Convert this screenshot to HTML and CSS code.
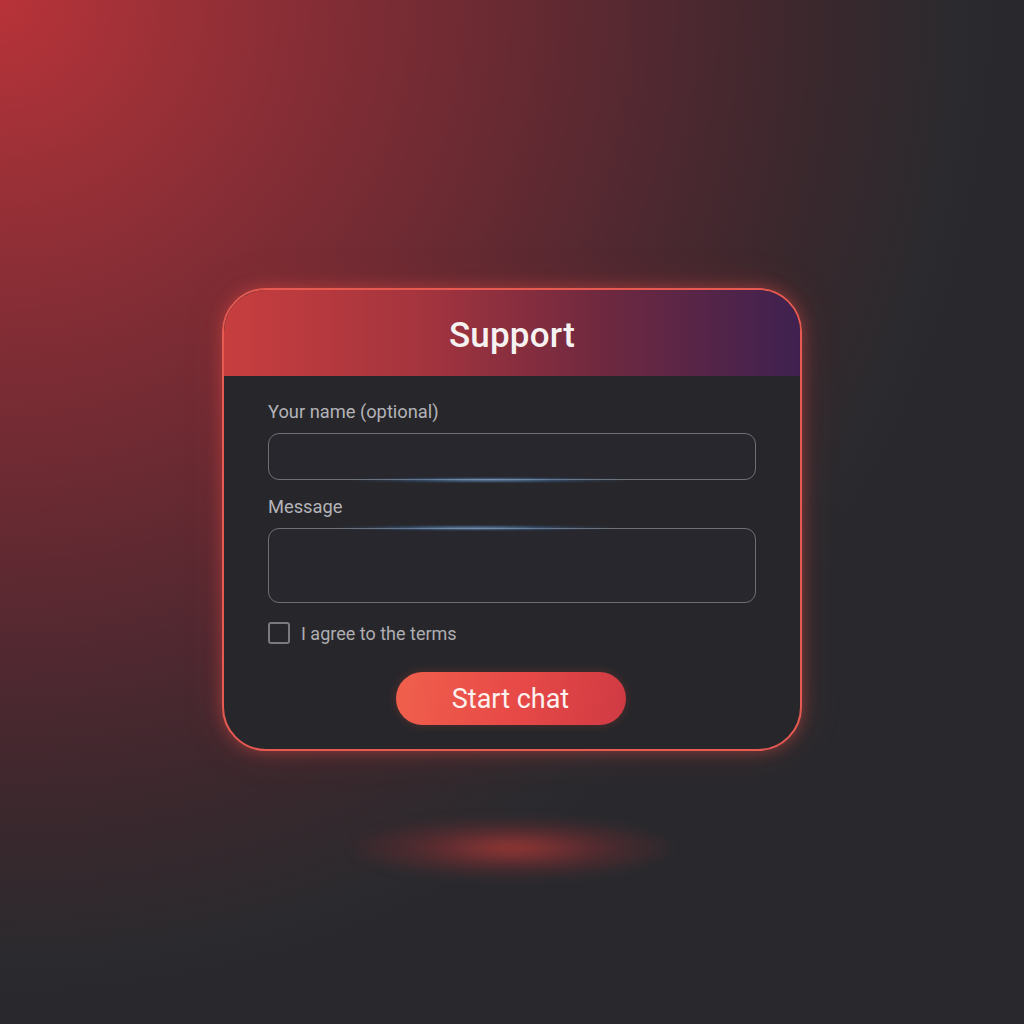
FILE: index.html
```html
<!DOCTYPE html>
<html>
<head>
<meta charset="utf-8">
<link rel="stylesheet" href="styles.css">
</head>
<body>
<div class="stage">
  <div class="card">
    <div class="card-header">
      <h1 class="title">Support</h1>
    </div>
    <div class="card-body">
      <label class="label">Your name (optional)</label>
      <div class="field field-input"><span class="streak streak-bottom"></span></div>
      <label class="label label-msg">Message</label>
      <div class="field field-area"><span class="streak streak-top"></span></div>
      <div class="check-row">
        <span class="checkbox"></span>
        <span class="check-text">I agree to the terms</span>
      </div>
      <div class="actions">
        <button class="btn">Start chat</button>
      </div>
    </div>
  </div>
  <div class="floor-glow"></div>
</div>
</body>
</html>
```

FILE: styles.css
```css
html, body {
  margin: 0;
  padding: 0;
  width: 1024px;
  height: 1024px;
  overflow: hidden;
}
body {
  font-family: Roboto, "Noto Sans", sans-serif;
  background:
    radial-gradient(circle 1000px at 0px 0px, #b83339 0%, #9a3037 18%, #842d35 32%, #6a2a32 50%, #4e2830 68%, #3a282d 82%, #2b2a2e 96%, rgba(42, 42, 46, 0) 100%),
    #29292d;
}
.stage {
  position: relative;
  width: 1024px;
  height: 1024px;
  display: flex;
  flex-direction: column;
  align-items: center;
  padding-top: 288px;
  box-sizing: border-box;
}
.card {
  width: 580px;
  box-sizing: border-box;
  border: 2px solid #e75a52;
  border-radius: 44px;
  overflow: hidden;
  background: #27272b;
  box-shadow: 0 0 16px rgba(232, 80, 72, 0.45), 0 0 40px rgba(200, 60, 60, 0.18);
  position: relative;
  z-index: 1;
}
.card-header {
  height: 86px;
  background: linear-gradient(90deg, #c83e3f 0%, #a3343e 35%, #70293f 65%, #3f2150 100%);
  display: flex;
  align-items: center;
  justify-content: center;
}
.title {
  margin: 0;
  color: #f6f2f2;
  font-weight: 500;
  font-size: 35px;
  letter-spacing: 0.2px;
  padding-top: 4px;
}
.card-body {
  padding: 25px 44px 24px;
  display: flex;
  flex-direction: column;
}
.label {
  display: block;
  color: #b4b3b8;
  font-size: 18.3px;
  line-height: 22px;
}
.label-msg {
  margin-top: 16px;
}
.field {
  position: relative;
  margin-top: 10px;
  border: 1.5px solid #707074;
  border-radius: 11px;
  box-sizing: border-box;
  background: rgba(40, 40, 46, 0.6);
}
.field-input {
  height: 47px;
}
.field-area {
  height: 75px;
}
.streak {
  position: absolute;
  width: 300px;
  height: 4px;
  border-radius: 2px;
  background: radial-gradient(ellipse at center, rgba(150, 200, 245, 0.95) 0%, rgba(80, 140, 210, 0.5) 35%, rgba(60, 110, 180, 0) 70%);
  filter: blur(1px);
}
.streak-bottom {
  bottom: -3px;
  left: 70px;
}
.streak-top {
  top: -3px;
  left: 55px;
}
.check-row {
  display: flex;
  align-items: center;
  margin-top: 19px;
  height: 22px;
}
.checkbox {
  width: 18px;
  height: 18px;
  border: 2px solid #7a7a7e;
  border-radius: 3px;
}
.check-text {
  margin-left: 11px;
  color: #aeadb2;
  font-size: 18px;
}
.actions {
  display: flex;
  justify-content: center;
  margin-top: 28px;
  padding-right: 3px;
}
.btn {
  width: 230px;
  height: 53px;
  border: none;
  border-radius: 27px;
  background: linear-gradient(100deg, #f0604c 0%, #e84a47 50%, #cf3a43 100%);
  color: #fbf1ef;
  font-family: Roboto, "Noto Sans", sans-serif;
  font-size: 27px;
  font-weight: 400;
  box-shadow: 0 0 10px rgba(220, 70, 60, 0.25);
}
.floor-glow {
  position: absolute;
  left: 352px;
  top: 818px;
  width: 320px;
  height: 60px;
  border-radius: 50%;
  background: radial-gradient(ellipse at center, rgba(190, 60, 55, 0.75) 0%, rgba(140, 45, 50, 0.4) 40%, rgba(42, 42, 46, 0) 75%);
  filter: blur(6px);
}
```
